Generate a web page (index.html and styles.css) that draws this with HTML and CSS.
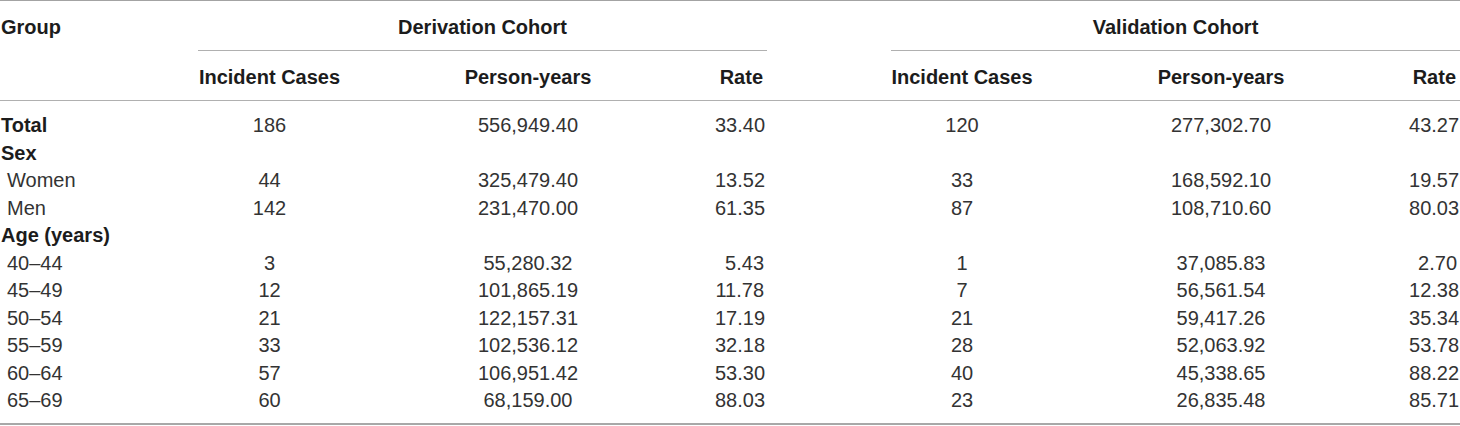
FILE: index.html
```html
<!DOCTYPE html>
<html lang="en">
<head>
<meta charset="utf-8">
<title>Incidence table</title>
<link rel="stylesheet" href="styles.css">
</head>
<body>
<table class="tbl">
  <colgroup>
    <col class="c-group">
    <col class="c-ic">
    <col class="c-py">
    <col class="c-rate">
    <col class="c-gap">
    <col class="c-ic2">
    <col class="c-py2">
    <col class="c-rate2">
  </colgroup>
  <thead>
    <tr class="h1">
      <th class="grp" rowspan="2">Group</th>
      <th class="cohort" colspan="3">Derivation Cohort</th>
      <th class="gap"></th>
      <th class="cohort" colspan="3">Validation Cohort</th>
    </tr>
    <tr class="h2">
      <th class="ctr">Incident Cases</th>
      <th class="ctr">Person-years</th>
      <th class="rt">Rate</th>
      <th class="gap"></th>
      <th class="ctr">Incident Cases</th>
      <th class="ctr">Person-years</th>
      <th class="rt">Rate</th>
    </tr>
  </thead>
  <tbody>
    <tr class="first">
      <td class="lbl b">Total</td><td class="ctr">186</td><td class="ctr">556,949.40</td><td class="rt">33.40</td><td></td><td class="ctr">120</td><td class="ctr">277,302.70</td><td class="rt">43.27</td>
    </tr>
    <tr>
      <td class="lbl b">Sex</td><td></td><td></td><td></td><td></td><td></td><td></td><td></td>
    </tr>
    <tr>
      <td class="lbl sub">Women</td><td class="ctr">44</td><td class="ctr">325,479.40</td><td class="rt">13.52</td><td></td><td class="ctr">33</td><td class="ctr">168,592.10</td><td class="rt">19.57</td>
    </tr>
    <tr>
      <td class="lbl sub">Men</td><td class="ctr">142</td><td class="ctr">231,470.00</td><td class="rt">61.35</td><td></td><td class="ctr">87</td><td class="ctr">108,710.60</td><td class="rt">80.03</td>
    </tr>
    <tr>
      <td class="lbl b">Age (years)</td><td></td><td></td><td></td><td></td><td></td><td></td><td></td>
    </tr>
    <tr>
      <td class="lbl sub">40–44</td><td class="ctr">3</td><td class="ctr">55,280.32</td><td class="rt">5.43</td><td></td><td class="ctr">1</td><td class="ctr">37,085.83</td><td class="rt">2.70</td>
    </tr>
    <tr>
      <td class="lbl sub">45–49</td><td class="ctr">12</td><td class="ctr">101,865.19</td><td class="rt">11.78</td><td></td><td class="ctr">7</td><td class="ctr">56,561.54</td><td class="rt">12.38</td>
    </tr>
    <tr>
      <td class="lbl sub">50–54</td><td class="ctr">21</td><td class="ctr">122,157.31</td><td class="rt">17.19</td><td></td><td class="ctr">21</td><td class="ctr">59,417.26</td><td class="rt">35.34</td>
    </tr>
    <tr>
      <td class="lbl sub">55–59</td><td class="ctr">33</td><td class="ctr">102,536.12</td><td class="rt">32.18</td><td></td><td class="ctr">28</td><td class="ctr">52,063.92</td><td class="rt">53.78</td>
    </tr>
    <tr>
      <td class="lbl sub">60–64</td><td class="ctr">57</td><td class="ctr">106,951.42</td><td class="rt">53.30</td><td></td><td class="ctr">40</td><td class="ctr">45,338.65</td><td class="rt">88.22</td>
    </tr>
    <tr class="last">
      <td class="lbl sub">65–69</td><td class="ctr">60</td><td class="ctr">68,159.00</td><td class="rt">88.03</td><td></td><td class="ctr">23</td><td class="ctr">26,835.48</td><td class="rt">85.71</td>
    </tr>
  </tbody>
</table>
</body>
</html>
```

FILE: styles.css
```css
html, body {
  margin: 0;
  padding: 0;
  background: #ffffff;
}

.tbl {
  width: 1460px;
  table-layout: fixed;
  border-collapse: separate;
  border-spacing: 0;
  border-top: 1px solid #a3a3a3;
  border-bottom: 2px solid #a8a8a8;
  font-family: "Liberation Sans", Arial, Helvetica, sans-serif;
  font-size: 20px;
  color: #333333;
}

.c-group { width: 198px; }
.c-ic { width: 143px; }
.c-py { width: 374px; }
.c-rate { width: 52px; }
.c-gap { width: 124px; }
.c-ic2 { width: 142px; }
.c-py2 { width: 376px; }
.c-rate2 { width: 51px; }

th, td {
  padding: 0;
  white-space: nowrap;
}

th {
  font-weight: bold;
  color: #1c1c1c;
  vertical-align: top;
}

.h1 th {
  padding-top: 3px;
  line-height: 46px;
}

.h2 th {
  padding-top: 3px;
  line-height: 46px;
  border-bottom: 1px solid #b0b0b0;
}

.h2 th.gap {
  border-bottom: 1px solid #b0b0b0;
}

.grp {
  text-align: left;
  padding-left: 1px;
  border-bottom: 1px solid #b0b0b0;
}

.cohort {
  text-align: center;
  border-bottom: 1px solid #b0b0b0;
}

.ctr { text-align: center; }
.rt { text-align: right; padding-right: 3px; }
th.rt { padding-right: 4px; }

td {
  line-height: 27.5px;
  vertical-align: middle;
}

.first td { padding-top: 11px; }
.last td { padding-bottom: 8.5px; }

.lbl { text-align: left; }
.lbl.b {
  font-weight: bold;
  color: #1c1c1c;
  padding-left: 1px;
}
.lbl.sub { padding-left: 7px; }
```
